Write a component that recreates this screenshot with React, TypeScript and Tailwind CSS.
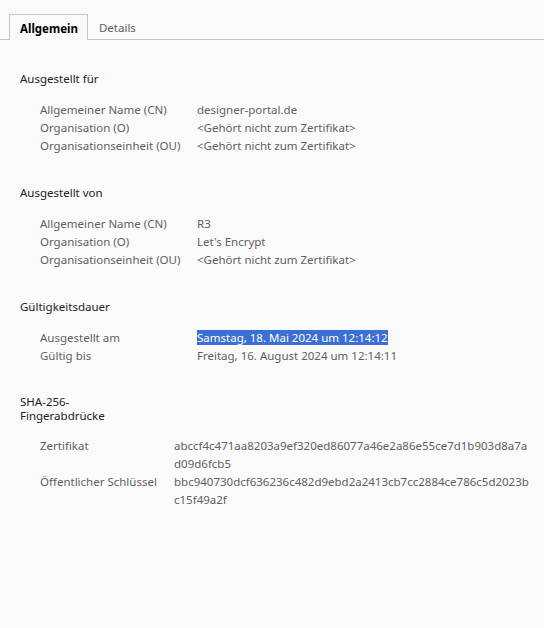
import React from "react";

interface IRow {
  label: string;
  value: string[];
  selected?: boolean;
}

interface ISection {
  title: string[];
  labelWidth: string;
  rows: IRow[];
}

const sections: ISection[] = [
  {
    title: ["Ausgestellt für"],
    labelWidth: "grid-cols-[157px_1fr]",
    rows: [
      { label: "Allgemeiner Name (CN)", value: ["designer-portal.de"] },
      { label: "Organisation (O)", value: ["<Gehört nicht zum Zertifikat>"] },
      { label: "Organisationseinheit (OU)", value: ["<Gehört nicht zum Zertifikat>"] },
    ],
  },
  {
    title: ["Ausgestellt von"],
    labelWidth: "grid-cols-[157px_1fr]",
    rows: [
      { label: "Allgemeiner Name (CN)", value: ["R3"] },
      { label: "Organisation (O)", value: ["Let's Encrypt"] },
      { label: "Organisationseinheit (OU)", value: ["<Gehört nicht zum Zertifikat>"] },
    ],
  },
  {
    title: ["Gültigkeitsdauer"],
    labelWidth: "grid-cols-[157px_1fr]",
    rows: [
      { label: "Ausgestellt am", value: ["Samstag, 18. Mai 2024 um 12:14:12"], selected: true },
      { label: "Gültig bis", value: ["Freitag, 16. August 2024 um 12:14:11"] },
    ],
  },
  {
    title: ["SHA-256-", "Fingerabdrücke"],
    labelWidth: "grid-cols-[134px_1fr]",
    rows: [
      {
        label: "Zertifikat",
        value: ["abccf4c471aa8203a9ef320ed86077a46e2a86e55ce7d1b903d8a7a", "d09d6fcb5"],
      },
      {
        label: "Öffentlicher Schlüssel",
        value: ["bbc940730dcf636236c482d9ebd2a2413cb7cc2884ce786c5d2023b", "c15f49a2f"],
      },
    ],
  },
];

export default function App() {
  return (
    <div className="min-h-[628px] w-[544px] bg-[#fafafa] text-[11.5px] font-['Noto_Sans',sans-serif]">
      {/* tabs */}
      <div className="flex items-end pl-[9px] pt-[14px] border-b border-[#c6c6c6]">
        <div className="h-[26px] -mb-px pl-[10px] pr-[9px] pt-[2px] flex items-center border border-b-0 border-[#c6c6c6] bg-[#fafafa] font-bold text-black">
          Allgemein
        </div>
        <div className="h-[25px] pl-[11px] pr-[12px] pt-[2px] flex items-center text-[#5f5f5f]">Details</div>
      </div>

      <div className="pt-[30px] pl-[20px] pr-[10px]">
        {sections.map((section, i) => (
          <div key={i} className="mb-[29px]">
            {section.title.length > 1 ? (
              <div className="text-[#222] py-[1px] leading-[14px]">
                {section.title.map((t) => (
                  <div key={t}>{t}</div>
                ))}
              </div>
            ) : (
              <div className="text-[#222] py-[3px] leading-[12px]">{section.title[0]}</div>
            )}
            <div className={`grid ${section.labelWidth} pl-[20px] mt-[13px] leading-[18px] text-[#5f5f5f]`}>
              {section.rows.map((row) => (
                <React.Fragment key={row.label}>
                  <div>{row.label}</div>
                  <div>
                    {row.value.map((v) =>
                      row.selected ? (
                        <span key={v} className="bg-[#3b6fd6] text-white">
                          {v}
                        </span>
                      ) : (
                        <div key={v}>{v}</div>
                      )
                    )}
                  </div>
                </React.Fragment>
              ))}
            </div>
          </div>
        ))}
      </div>
    </div>
  );
}
